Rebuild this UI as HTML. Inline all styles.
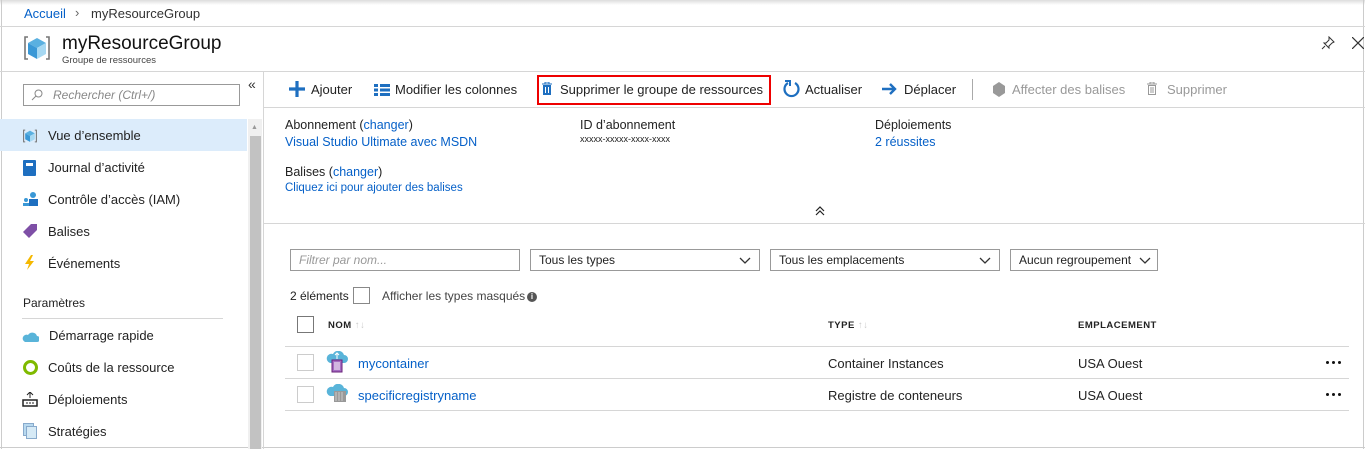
<!DOCTYPE html>
<html><head><meta charset="utf-8"><style>
*{box-sizing:border-box;margin:0;padding:0}
body{width:1365px;height:449px;overflow:hidden;background:#fff;font-family:"Liberation Sans",sans-serif;font-size:12.5px;color:#222;position:relative}
.a{position:absolute;white-space:nowrap}
.b{color:#0560c8}
.hl{position:absolute;height:1px;background:#d6d6d6}
.vl{position:absolute;width:1px;background:#d6d6d6}
.sel{position:absolute;height:22px;border:1px solid #999;padding:0 8px;line-height:20px;font-size:12px}
.chev{position:absolute;right:8px;top:4px}
.cb{position:absolute;width:17px;height:17px;border:1px solid #ccc}
.th{font-size:9.5px;font-weight:bold;letter-spacing:.5px}
.dots{position:absolute;width:18px;height:4px}
.dots i{float:left;width:3px;height:3px;border-radius:50%;background:#111;margin-right:3px}
</style></head><body>
<div class="a" style="left:0;top:0;width:1365px;height:5px;background:linear-gradient(#ddd,#fff)"></div>
<div class="vl" style="left:1px;top:0;height:449px;background:#ccc"></div>
<div class="vl" style="left:1363px;top:0;height:449px;background:#ccc"></div>
<div class="hl" style="left:0;top:447px;width:1365px;background:#ccc"></div>
<div class="a b" style="left:24px;top:6px;font-size:13px">Accueil</div>
<div class="a" style="left:75px;top:5px;font-size:13px;color:#666">›</div>
<div class="a" style="left:91px;top:6px;font-size:13px;color:#333">myResourceGroup</div>
<div class="hl" style="left:0;top:26px;width:1365px"></div>
<svg class="a" style="left:22px;top:33px" width="30" height="30" viewBox="0 0 30 30"><path d="M6 4H3v22h3M24 4h3v22h-3" fill="none" stroke="#777" stroke-width="1.6"/><path d="M15 5l9 5-9 5-9-5z" fill="#5ab0e0"/><path d="M6 10l9 5v11l-9-5z" fill="#3a98d6"/><path d="M24 10l-9 5v11l9-5z" fill="#a6d8f2"/></svg>
<div class="a" style="left:62px;top:33px;font-size:19px;color:#111">myResourceGroup</div>
<div class="a" style="left:62px;top:55px;font-size:9.5px;color:#444">Groupe de ressources</div>
<svg class="a" style="left:1321px;top:36px" width="14" height="14"><path d="M8 1l5 5-2 1-3 3 0 2-5-5 2 0 3-3z M4 10l-3 3" fill="none" stroke="#333"/></svg>
<svg class="a" style="left:1352px;top:37px" width="12" height="12"><path d="M0 0L12 12M12 0L0 12" stroke="#333" stroke-width="1.2"/></svg>
<div class="hl" style="left:0;top:71px;width:1365px"></div>
<div class="a" style="left:23px;top:84px;width:217px;height:22px;border:1px solid #999"></div>
<svg class="a" style="left:31px;top:89px" width="12" height="12"><circle cx="7.5" cy="4.5" r="3.5" fill="none" stroke="#888"/><path d="M5 7L1 11" stroke="#888"/></svg>
<div class="a" style="left:53px;top:88px;font-style:italic;color:#888;font-size:12px">Rechercher (Ctrl+/)</div>
<div class="a" style="left:248px;top:76px;font-size:14px;color:#333">«</div>
<div class="a" style="left:0;top:119px;width:247px;height:32px;background:#dcecfb"></div>
<div class="a" style="left:248px;top:119px;width:14px;height:330px;background:#f0f0f0"></div>
<div class="a" style="left:250px;top:136px;width:11px;height:313px;background:#c2c2c2"></div>
<div class="a" style="left:251px;top:124px;font-size:7px;color:#999">▲</div>
<div class="vl" style="left:263px;top:71px;height:378px"></div>
<svg class="a" style="left:22px;top:128px" width="16" height="16" viewBox="0 0 30 30"><path d="M6 4H3v22h3M24 4h3v22h-3" fill="none" stroke="#777" stroke-width="2"/><path d="M15 5l9 5-9 5-9-5z" fill="#5ab0e0"/><path d="M6 10l9 5v11l-9-5z" fill="#3a98d6"/><path d="M24 10l-9 5v11l9-5z" fill="#a6d8f2"/></svg>
<div class="a" style="left:48px;top:128px;font-size:13px">Vue d’ensemble</div>
<div class="a" style="left:23px;top:160px;width:13px;height:16px;background:#1e6fc0;border-radius:1px"><div style="margin:3px 3px;height:3px;background:#fff"></div></div>
<div class="a" style="left:48px;top:160px;font-size:13px">Journal d’activité</div>
<svg class="a" style="left:22px;top:192px" width="16" height="15"><circle cx="11" cy="3" r="3" fill="#3a98d6"/><rect x="7" y="7" width="9" height="7" fill="#1e6fc0"/><circle cx="4" cy="8" r="2" fill="#3a98d6"/><rect x="1" y="11" width="6" height="3" fill="#3a98d6"/></svg>
<div class="a" style="left:48px;top:192px;font-size:13px">Contrôle d’accès (IAM)</div>
<svg class="a" style="left:22px;top:223px" width="16" height="16"><path d="M9 1h6v6l-8 8-6-6z" fill="#7e4fa6"/></svg>
<div class="a" style="left:48px;top:224px;font-size:13px">Balises</div>
<svg class="a" style="left:24px;top:255px" width="12" height="15"><path d="M7 0L1 9h4l-2 6 7-9H6l3-6z" fill="#f5b800"/></svg>
<div class="a" style="left:48px;top:256px;font-size:13px">Événements</div>
<div class="a" style="left:23px;top:296px;font-size:12px;color:#222">Paramètres</div>
<div class="hl" style="left:22px;top:318px;width:201px"></div>
<svg class="a" style="left:22px;top:330px" width="17" height="12"><path d="M3 12h12a3 3 0 0 0 0-6 5 5 0 0 0-9-1 3.5 3.5 0 0 0-3 7z" fill="#59b4d9"/></svg>
<div class="a" style="left:49px;top:328px;font-size:13px">Démarrage rapide</div>
<div class="a" style="left:23px;top:360px;width:15px;height:15px;border-radius:50%;border:3px solid #7fba00;background:#fff"></div>
<div class="a" style="left:48px;top:360px;font-size:13px">Coûts de la ressource</div>
<svg class="a" style="left:22px;top:392px" width="16" height="15"><path d="M8 0v6M5 3l3-3 3 3" fill="none" stroke="#222"/><rect x="1" y="8" width="14" height="6" fill="none" stroke="#222" stroke-width="1.5"/><path d="M4 11h2M7 11h2M10 11h2" stroke="#222"/></svg>
<div class="a" style="left:48px;top:392px;font-size:13px">Déploiements</div>
<div class="a" style="left:23px;top:423px;width:11px;height:13px;background:#b8d9ef;border:1px solid #8ac"></div>
<div class="a" style="left:26px;top:426px;width:11px;height:13px;background:#d6eaf6;border:1px solid #8ac"></div>
<div class="a" style="left:48px;top:424px;font-size:13px">Stratégies</div>
<svg class="a" style="left:289px;top:81px" width="16" height="16"><path d="M8 0v16M0 8h16" stroke="#1e6fc0" stroke-width="3.2"/></svg>
<div class="a" style="left:311px;top:82px;font-size:13px">Ajouter</div>
<svg class="a" style="left:374px;top:84px" width="16" height="12"><g fill="#1e6fc0"><rect x="0" y="0" width="4" height="3"/><rect x="6" y="0" width="10" height="3"/><rect x="0" y="4.5" width="4" height="3"/><rect x="6" y="4.5" width="10" height="3"/><rect x="0" y="9" width="4" height="3"/><rect x="6" y="9" width="10" height="3"/></g></svg>
<div class="a" style="left:395px;top:82px;font-size:13px">Modifier les colonnes</div>
<div class="a" style="left:537px;top:75px;width:234px;height:30px;border:2px solid #e00"></div>
<svg class="a" style="left:542px;top:82px" width="10" height="14"><path d="M0 2h10M3 2V0h4v2" stroke="#1e6fc0" fill="none"/><rect x="1" y="3" width="8" height="10" fill="#1e6fc0"/><path d="M3.5 5v6M6.5 5v6" stroke="#fff"/></svg>
<div class="a" style="left:560px;top:82px;font-size:13px">Supprimer le groupe de ressources</div>
<svg class="a" style="left:783px;top:80px" width="17" height="18"><path d="M5 3a7 7 0 1 0 7 0" fill="none" stroke="#1e6fc0" stroke-width="2.2"/><path d="M2 1h5v5" fill="none" stroke="#1e6fc0" stroke-width="2"/></svg>
<div class="a" style="left:805px;top:82px;font-size:13px">Actualiser</div>
<svg class="a" style="left:882px;top:82px" width="16" height="14"><path d="M0 7h13M8 2l5 5-5 5" fill="none" stroke="#1e6fc0" stroke-width="2.4"/></svg>
<div class="a" style="left:904px;top:82px;font-size:13px">Déplacer</div>
<div class="vl" style="left:972px;top:79px;height:21px;background:#aaa"></div>
<svg class="a" style="left:992px;top:82px" width="14" height="15"><path d="M7 0l6 4v7l-6 4-6-4V4z" fill="#999"/></svg>
<div class="a" style="left:1012px;top:82px;font-size:13px;color:#999">Affecter des balises</div>
<svg class="a" style="left:1147px;top:82px" width="10" height="14"><path d="M0 2h10M3 2V0h4v2" stroke="#999" fill="none"/><rect x="1.5" y="3.5" width="7" height="9" fill="none" stroke="#999"/><path d="M4 5v6M6 5v6" stroke="#999"/></svg>
<div class="a" style="left:1167px;top:82px;font-size:13px;color:#999">Supprimer</div>
<div class="hl" style="left:263px;top:107px;width:1102px"></div>
<div class="a" style="left:285px;top:118px">Abonnement (<span class="b">changer</span>)</div>
<div class="a b" style="left:285px;top:135px">Visual Studio Ultimate avec MSDN</div>
<div class="a" style="left:580px;top:118px">ID d’abonnement</div>
<div class="a" style="left:580px;top:134px;font-size:9px">xxxxx-xxxxx-xxxx-xxxx</div>
<div class="a" style="left:875px;top:118px">Déploiements</div>
<div class="a b" style="left:875px;top:135px">2 réussites</div>
<div class="a" style="left:285px;top:165px">Balises (<span class="b">changer</span>)</div>
<div class="a b" style="left:285px;top:182px;font-size:11.5px">Cliquez ici pour ajouter des balises</div>
<svg class="a" style="left:815px;top:206px" width="10" height="10"><path d="M1 5l4-4 4 4M1 9l4-4 4 4" fill="none" stroke="#222" stroke-width="1.2"/></svg>
<div class="hl" style="left:263px;top:223px;width:1102px"></div>
<div class="sel" style="left:290px;top:249px;width:230px;color:#999;font-style:italic">Filtrer par nom...</div>
<div class="sel" style="left:530px;top:249px;width:230px">Tous les types<svg class="chev" width="12" height="12"><path d="M1 4l5 5 5-5" fill="none" stroke="#333" stroke-width="1.3"/></svg></div>
<div class="sel" style="left:770px;top:249px;width:230px">Tous les emplacements<svg class="chev" width="12" height="12"><path d="M1 4l5 5 5-5" fill="none" stroke="#333" stroke-width="1.3"/></svg></div>
<div class="sel" style="left:1010px;top:249px;width:148px">Aucun regroupement<svg class="chev" style="right:6px" width="12" height="12"><path d="M1 4l5 5 5-5" fill="none" stroke="#333" stroke-width="1.3"/></svg></div>
<div class="a" style="left:290px;top:289px;font-size:12px">2 éléments</div>
<div class="a" style="left:353px;top:287px;width:17px;height:17px;border:1px solid #888"></div>
<div class="a" style="left:382px;top:289px;font-size:12px;color:#444">Afficher les types masqués</div>
<div class="a" style="left:527px;top:292px;width:10px;height:10px;border-radius:50%;background:#555;color:#fff;font-size:8px;text-align:center;line-height:10px;font-weight:bold">i</div>
<div class="a" style="left:297px;top:316px;width:17px;height:17px;border:1px solid #777"></div>
<div class="a th" style="left:328px;top:320px">NOM <span style="color:#ccc;font-weight:normal">↑↓</span></div>
<div class="a th" style="left:828px;top:320px">TYPE <span style="color:#ccc;font-weight:normal">↑↓</span></div>
<div class="a th" style="left:1078px;top:320px">EMPLACEMENT</div>
<div class="hl" style="left:285px;top:346px;width:1064px"></div>
<div class="cb" style="left:297px;top:354px"></div>
<svg class="a" style="left:326px;top:351px" width="22" height="22"><path d="M4 12h14a4 4 0 0 0 0-8 6 6 0 0 0-11-1 4 4 0 0 0-3 9z" fill="#59b4d9"/><rect x="6" y="9" width="10" height="12" fill="#a56cc1" stroke="#68217a"/><path d="M9 11v8M11 11v8M13 11v8" stroke="#fff"/><path d="M11 2v6M9 4l2-2 2 2" stroke="#fff" fill="none"/></svg>
<div class="a b" style="left:358px;top:356px;font-size:13px">mycontainer</div>
<div class="a" style="left:828px;top:356px;font-size:13px">Container Instances</div>
<div class="a" style="left:1078px;top:356px;font-size:13px">USA Ouest</div>
<div class="dots" style="left:1326px;top:361px"><i></i><i></i><i></i></div>
<div class="hl" style="left:285px;top:378px;width:1064px"></div>
<div class="cb" style="left:297px;top:386px"></div>
<svg class="a" style="left:326px;top:384px" width="22" height="20"><path d="M4 12h14a4 4 0 0 0 0-8 6 6 0 0 0-11-1 4 4 0 0 0-3 9z" fill="#59b4d9"/><rect x="8" y="7" width="12" height="11" fill="#999"/><path d="M10 8v9M13 8v9M16 8v9" stroke="#ccc"/></svg>
<div class="a b" style="left:358px;top:388px;font-size:13px">specificregistryname</div>
<div class="a" style="left:828px;top:388px;font-size:13px">Registre de conteneurs</div>
<div class="a" style="left:1078px;top:388px;font-size:13px">USA Ouest</div>
<div class="dots" style="left:1326px;top:393px"><i></i><i></i><i></i></div>
<div class="hl" style="left:285px;top:410px;width:1064px"></div>
</body></html>
